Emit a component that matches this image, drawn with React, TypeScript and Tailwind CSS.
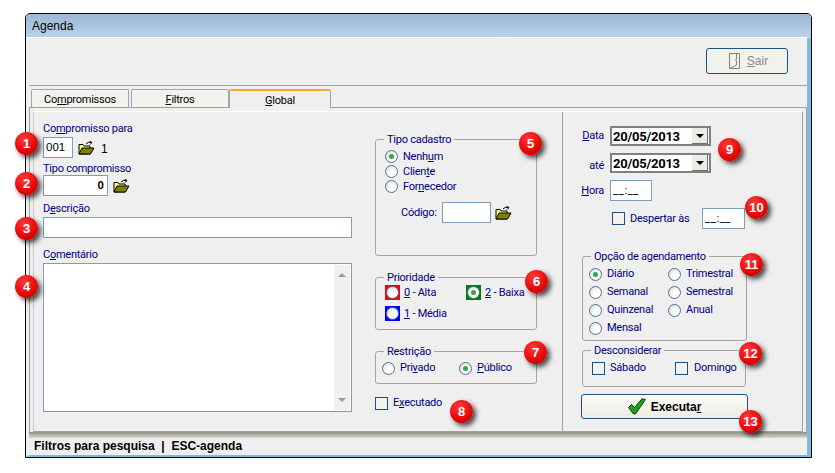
import React from 'react';

const labelClass = "text-[#000080] font-['Roboto',sans-serif] text-[11px] tracking-[-0.25px] leading-[14px]";
const fieldLabelClass = "h-[14px] text-[#000080] font-['Roboto',sans-serif] text-[11px] tracking-[-0.25px] leading-[16px]";

function Badge({ n, className }: { n: number; className: string }) {
  return (
    <div
      className={`absolute w-[23px] h-[23px] -ml-[11px] -mt-[11px] rounded-full bg-[radial-gradient(circle_at_40%_30%,#ff3a3a_0%,#e80a0a_55%,#a80000_100%)] shadow-[3px_3px_5px_rgba(0,0,0,0.7)] text-white text-[13px] font-bold leading-[23px] text-center ${className}`}
    >
      {n}
    </div>
  );
}

function Folder() {
  return (
    <svg width="17" height="14" viewBox="0 0 17 14" className="shrink-0">
      <path d="M1 3.5 L1 13 L12 13 L12 5 L6 5 L5 3.5 Z" fill="#ffff66" stroke="#000" strokeWidth="1" />
      <path d="M1 13 L4 7 L16 7 L12.5 13 Z" fill="#808000" stroke="#000" strokeWidth="1" />
      <path d="M8 3 Q10 0.5 13 1.5 M11.5 0 L14 1.6 L12 3.6" fill="none" stroke="#000" strokeWidth="1" />
    </svg>
  );
}

function Radio({ on }: { on?: boolean }) {
  return (
    <span className="w-[13px] h-[13px] shrink-0 rounded-full border border-[#4f7396] bg-[radial-gradient(circle_at_65%_65%,#ffffff_30%,#d4d4d0_100%)] flex items-center justify-center">
      {on && <span className="w-[5px] h-[5px] rounded-full bg-[#2fa84a]" />}
    </span>
  );
}

function Check() {
  return <span className="block w-[13px] h-[13px] shrink-0 border border-[#1c5180] bg-[#f3f3ee]" />;
}

function RadioRow({ label, on, className = "" }: { label: React.ReactNode; on?: boolean; className?: string }) {
  return (
    <div className={`flex items-center gap-[5px] ${labelClass} ${className}`}>
      <Radio on={on} />
      <span>{label}</span>
    </div>
  );
}

function Group({ title, className, children }: { title: string; className: string; children: React.ReactNode }) {
  return (
    <fieldset className={`border border-[#a8a598] rounded-[3px] ${className}`}>
      <legend className={`ml-[8px] px-[3px] ${fieldLabelClass}`}>{title}</legend>
      {children}
    </fieldset>
  );
}

function Field({ className = "", children }: { className?: string; children?: React.ReactNode }) {
  return <div className={`border border-[#7f9db9] bg-white text-[11.5px] text-black ${className}`}>{children}</div>;
}

function DateCombo({ value }: { value: string }) {
  return (
    <div className="w-[101px] h-[20px] border-2 border-[#808080] bg-white flex items-center justify-between pl-[1px] pr-[1px]">
      <span className="text-[13px] font-bold text-black leading-none">{value}</span>
      <span className="w-[16px] h-[16px] bg-[#ecebe5] border-r border-b border-[#707070] flex items-center justify-center">
        <span className="w-0 h-0 border-x-[4px] border-x-transparent border-t-[4px] border-t-black" />
      </span>
    </div>
  );
}

function PriorityBox({ color, on }: { color: string; on?: boolean }) {
  return (
    <span className={`w-[15px] h-[15px] shrink-0 flex items-center justify-center ${color}`}>
      <Radio on={on} />
    </span>
  );
}

export default function App() {
  return (
    <div className="relative w-[835px] h-[473px] bg-white pt-[13px] pl-[25px] overflow-hidden font-['Liberation_Sans',sans-serif]">
      <div className="w-[787px] h-[445px] border border-black rounded-t-[5px] flex flex-col overflow-hidden">
        <div className="h-[23px] shrink-0 bg-gradient-to-b from-[#9cb7d4] to-[#b9d2ec] pl-[6px] text-[12px] leading-[24px] text-black">
          Agenda
        </div>
        <div className="flex-1 flex flex-col bg-[#efefef] border-t border-white border-l-[3px] border-l-[#eef1f4] border-r-[4px] border-r-[#7cc0e0] border-b-[2px] border-b-[#6fc0e0]">
          <div className="h-[48px] shrink-0 border-b border-[#a0a0a0] flex justify-end items-start pt-[10px] pr-[19px]">
            <div className="w-[82px] h-[26px] pl-[3px] border border-[#1c5180] rounded-[3px] bg-[#f2f2ec] flex items-center justify-center gap-[7px] text-[#8a8a8a] text-[12px]">
              <svg width="11" height="16" viewBox="0 0 11 16">
                <path d="M0.5 0.5 H10.5 V15.5 H0.5 Z M7.5 0.5 V6 L6.5 7 L7.5 8 V12 L1 15.5" fill="none" stroke="#808080" />
              </svg>
              <span><u>S</u>air</span>
            </div>
          </div>
          <div className="h-[21px] shrink-0 flex items-end pl-[2px] gap-[2px] font-['Roboto',sans-serif] tracking-[-0.25px] text-[11px] text-black">
            <div className="w-[98px] h-[18px] border border-b-0 border-[#9aa7b0] rounded-t-[2px] bg-[#f3f3ee] text-center leading-[19px]">
              Co<u>m</u>promissos
            </div>
            <div className="w-[98px] h-[18px] border border-b-0 border-[#9aa7b0] rounded-t-[2px] bg-[#f3f3ee] text-center leading-[19px]">
              <u>F</u>iltros
            </div>
            <div className="-ml-[2px] w-[102px] h-[19px] -mb-[1px] relative border-x border-[#9aa7b0] border-t-2 border-t-[#f4a92e] rounded-t-[2px] bg-[#efefef] text-center leading-[19px]">
              <u>G</u>lobal
            </div>
          </div>
          <div className="h-[325px] shrink-0 border border-b-0 border-[#a0a0a0] px-[3px] pt-[3px]">
            <div className="h-[321px] border-t border-white border-r border-b border-r-[#a0a0a0] border-b-[#a0a0a0] border-l border-l-[#c8c8c8] flex">
              <div className="w-[529px] shrink-0 border-r border-[#a0a0a0] flex">
                <div className="w-[309px] ml-[9px] shrink-0 pt-[9px]">
                  <div className={fieldLabelClass}>Co<u>m</u>promisso para</div>
                  <div className="mt-[2px] flex items-center">
                    <Field className="w-[30px] h-[21px] px-[2px] leading-[18px]">001</Field>
                    <span className="ml-[5px]"><Folder /></span>
                    <span className="ml-[6px] text-[12px] text-black leading-none mt-[2px]">1</span>
                  </div>
                  <div className={`mt-[3px] ${fieldLabelClass}`}>Tipo compromisso</div>
                  <div className="flex items-center">
                    <Field className="w-[65px] h-[21px] px-[3px] leading-[18px] text-right font-bold">0</Field>
                    <span className="ml-[5px]"><Folder /></span>
                  </div>
                  <div className={`mt-[5px] ${fieldLabelClass}`}>D<u>e</u>scrição</div>
                  <Field className="mt-[2px] h-[21px]" />
                  <div className={`mt-[9px] ${fieldLabelClass}`}><span>C<u>o</u>mentário</span></div>
                  <Field className="mt-[2px] h-[149px] flex justify-end p-[1px]">
                    <div className="w-[16px] bg-[#f0f0f0] flex flex-col justify-between items-center py-[8px]">
                      <span className="w-0 h-0 border-x-[4px] border-x-transparent border-b-[4px] border-b-[#9a9a9a]" />
                      <span className="w-0 h-0 border-x-[4px] border-x-transparent border-t-[4px] border-t-[#9a9a9a]" />
                    </div>
                  </Field>
                </div>
                <div className="w-[162px] ml-[23px] shrink-0 pt-[20px]">
                  <Group title="Tipo cadastro" className="h-[124px]">
                    <div className="pt-[3px] pl-[9px]">
                      <RadioRow on label={<>Nenh<u>u</u>m</>} className="h-[15px]" />
                      <RadioRow label={<>Clien<u>t</u>e</>} className="h-[15px]" />
                      <RadioRow label={<>For<u>n</u>ecedor</>} className="h-[15px]" />
                    </div>
                    <div className={`mt-[8px] pl-[25px] flex items-center ${labelClass}`}>
                      <span className="w-[36px]">Código:</span>
                      <Field className="ml-[5px] w-[49px] h-[21px]" />
                      <span className="ml-[4px]"><Folder /></span>
                    </div>
                  </Group>
                  <Group title="Prioridade" className="mt-[14px] h-[60px]">
                    <div className={`pt-[1px] pl-[9px] ${labelClass}`}>
                      <div className="flex items-center">
                        <PriorityBox color="bg-[#ff0000]" />
                        <span className="ml-[4px] w-[62px]"><u>0</u> - Alta</span>
                        <PriorityBox color="bg-[#008000]" on />
                        <span className="ml-[4px]"><u>2</u> - Baixa</span>
                      </div>
                      <div className="mt-[6px] flex items-center">
                        <PriorityBox color="bg-[#0000ff]" />
                        <span className="ml-[4px]"><u>1</u> - Média</span>
                      </div>
                    </div>
                  </Group>
                  <Group title="Restrição" className="mt-[14px] h-[40px]">
                    <div className="pt-[3px] pl-[6px] flex">
                      <RadioRow label={<>Pri<u>v</u>ado</>} className="w-[77px]" />
                      <RadioRow on label={<><u>P</u>úblico</>} />
                    </div>
                  </Group>
                  <div className={`mt-[13px] flex items-center gap-[5px] ${labelClass}`}>
                    <Check />
                    <span className="-mt-[1px]">E<u>x</u>ecutado</span>
                  </div>
                </div>
              </div>
              <div className="flex-1 pl-[18px] pt-[14px]">
                <div className={`flex items-center ${labelClass}`}>
                  <span className="w-[23px] text-right"><u>D</u>ata</span>
                  <span className="ml-[6px]"><DateCombo value="20/05/2013" /></span>
                </div>
                <div className={`mt-[7px] flex items-center ${labelClass}`}>
                  <span className="w-[23px] pt-[5px] text-right">até</span>
                  <span className="ml-[6px]"><DateCombo value="20/05/2013" /></span>
                </div>
                <div className={`mt-[7px] flex items-center ${labelClass}`}>
                  <span className="w-[23px] text-right"><u>H</u>ora</span>
                  <Field className="ml-[6px] w-[42px] h-[21px] px-[2px] leading-[18px] tracking-[0.5px]">__:__</Field>
                </div>
                <div className={`mt-[7px] flex items-center ${labelClass}`}>
                  <span className="ml-[31px] block"><Check /></span>
                  <span className="ml-[5px] w-[60px] whitespace-nowrap">Despertar às</span>
                  <Field className="ml-[12px] w-[43px] h-[21px] px-[2px] leading-[18px] tracking-[0.5px] text-[#555]">__:__</Field>
                </div>
                <Group title="Opção de agendamento" className="mt-[20px] ml-[1px] w-[165px] h-[92px]">
                  <div className="pt-[2px] pl-[6px] grid grid-cols-[79px_1fr] auto-rows-[18px]">
                    <RadioRow on label="Diário" />
                    <RadioRow label="Trimestral" />
                    <RadioRow label="Semanal" />
                    <RadioRow label="Semestral" />
                    <RadioRow label="Quinzenal" />
                    <RadioRow label="Anual" />
                    <RadioRow label="Mensal" />
                  </div>
                </Group>
                <Group title="Desconsiderar" className="mt-[2px] ml-[1px] w-[164px] h-[44px]">
                  <div className={`pt-[4px] pl-[9px] flex items-center ${labelClass}`}>
                    <Check />
                    <span className="ml-[5px] w-[65px]">Sábado</span>
                    <Check />
                    <span className="ml-[6px]">Domingo</span>
                  </div>
                </Group>
                <div className="mt-[7px] w-[167px] h-[25px] border border-[#1c5180] rounded-[3px] bg-gradient-to-b from-[#fbfbf8] to-[#ecebe4] flex items-center justify-center gap-[5px] text-[12px] font-bold text-black">
                  <svg width="18" height="17" viewBox="0 0 18 17">
                    <path d="M0.5 9.5 L3.5 6.5 L6.5 9.5 L14 0.8 L17.5 1.5 L7.5 16 L5.5 16 Z" fill="#1fa01f" stroke="#0b3d0b" strokeWidth="1" strokeLinejoin="round" />
                  </svg>
                  <span>Executa<u>r</u></span>
                </div>
              </div>
            </div>
          </div>
          <div className="h-[6px] shrink-0 bg-gradient-to-b from-[#8f8f88] to-[#d8d8d2]" />
          <div className="flex-1 pl-[5px] text-[12px] font-bold text-black leading-[17px] whitespace-pre">
            Filtros para pesquisa  |  ESC-agenda
          </div>
        </div>
      </div>

      <Badge n={1} className="left-[26px] top-[143px]" />
      <Badge n={2} className="left-[26px] top-[183px]" />
      <Badge n={3} className="left-[26px] top-[228px]" />
      <Badge n={4} className="left-[26px] top-[286px]" />
      <Badge n={5} className="left-[530px] top-[143px]" />
      <Badge n={6} className="left-[536px] top-[281px]" />
      <Badge n={7} className="left-[535px] top-[352px]" />
      <Badge n={8} className="left-[461px] top-[411px]" />
      <Badge n={9} className="left-[729px] top-[149px]" />
      <Badge n={10} className="left-[756px] top-[207px]" />
      <Badge n={11} className="left-[751px] top-[264px]" />
      <Badge n={12} className="left-[750px] top-[353px]" />
      <Badge n={13} className="left-[750px] top-[421px]" />
    </div>
  );
}
